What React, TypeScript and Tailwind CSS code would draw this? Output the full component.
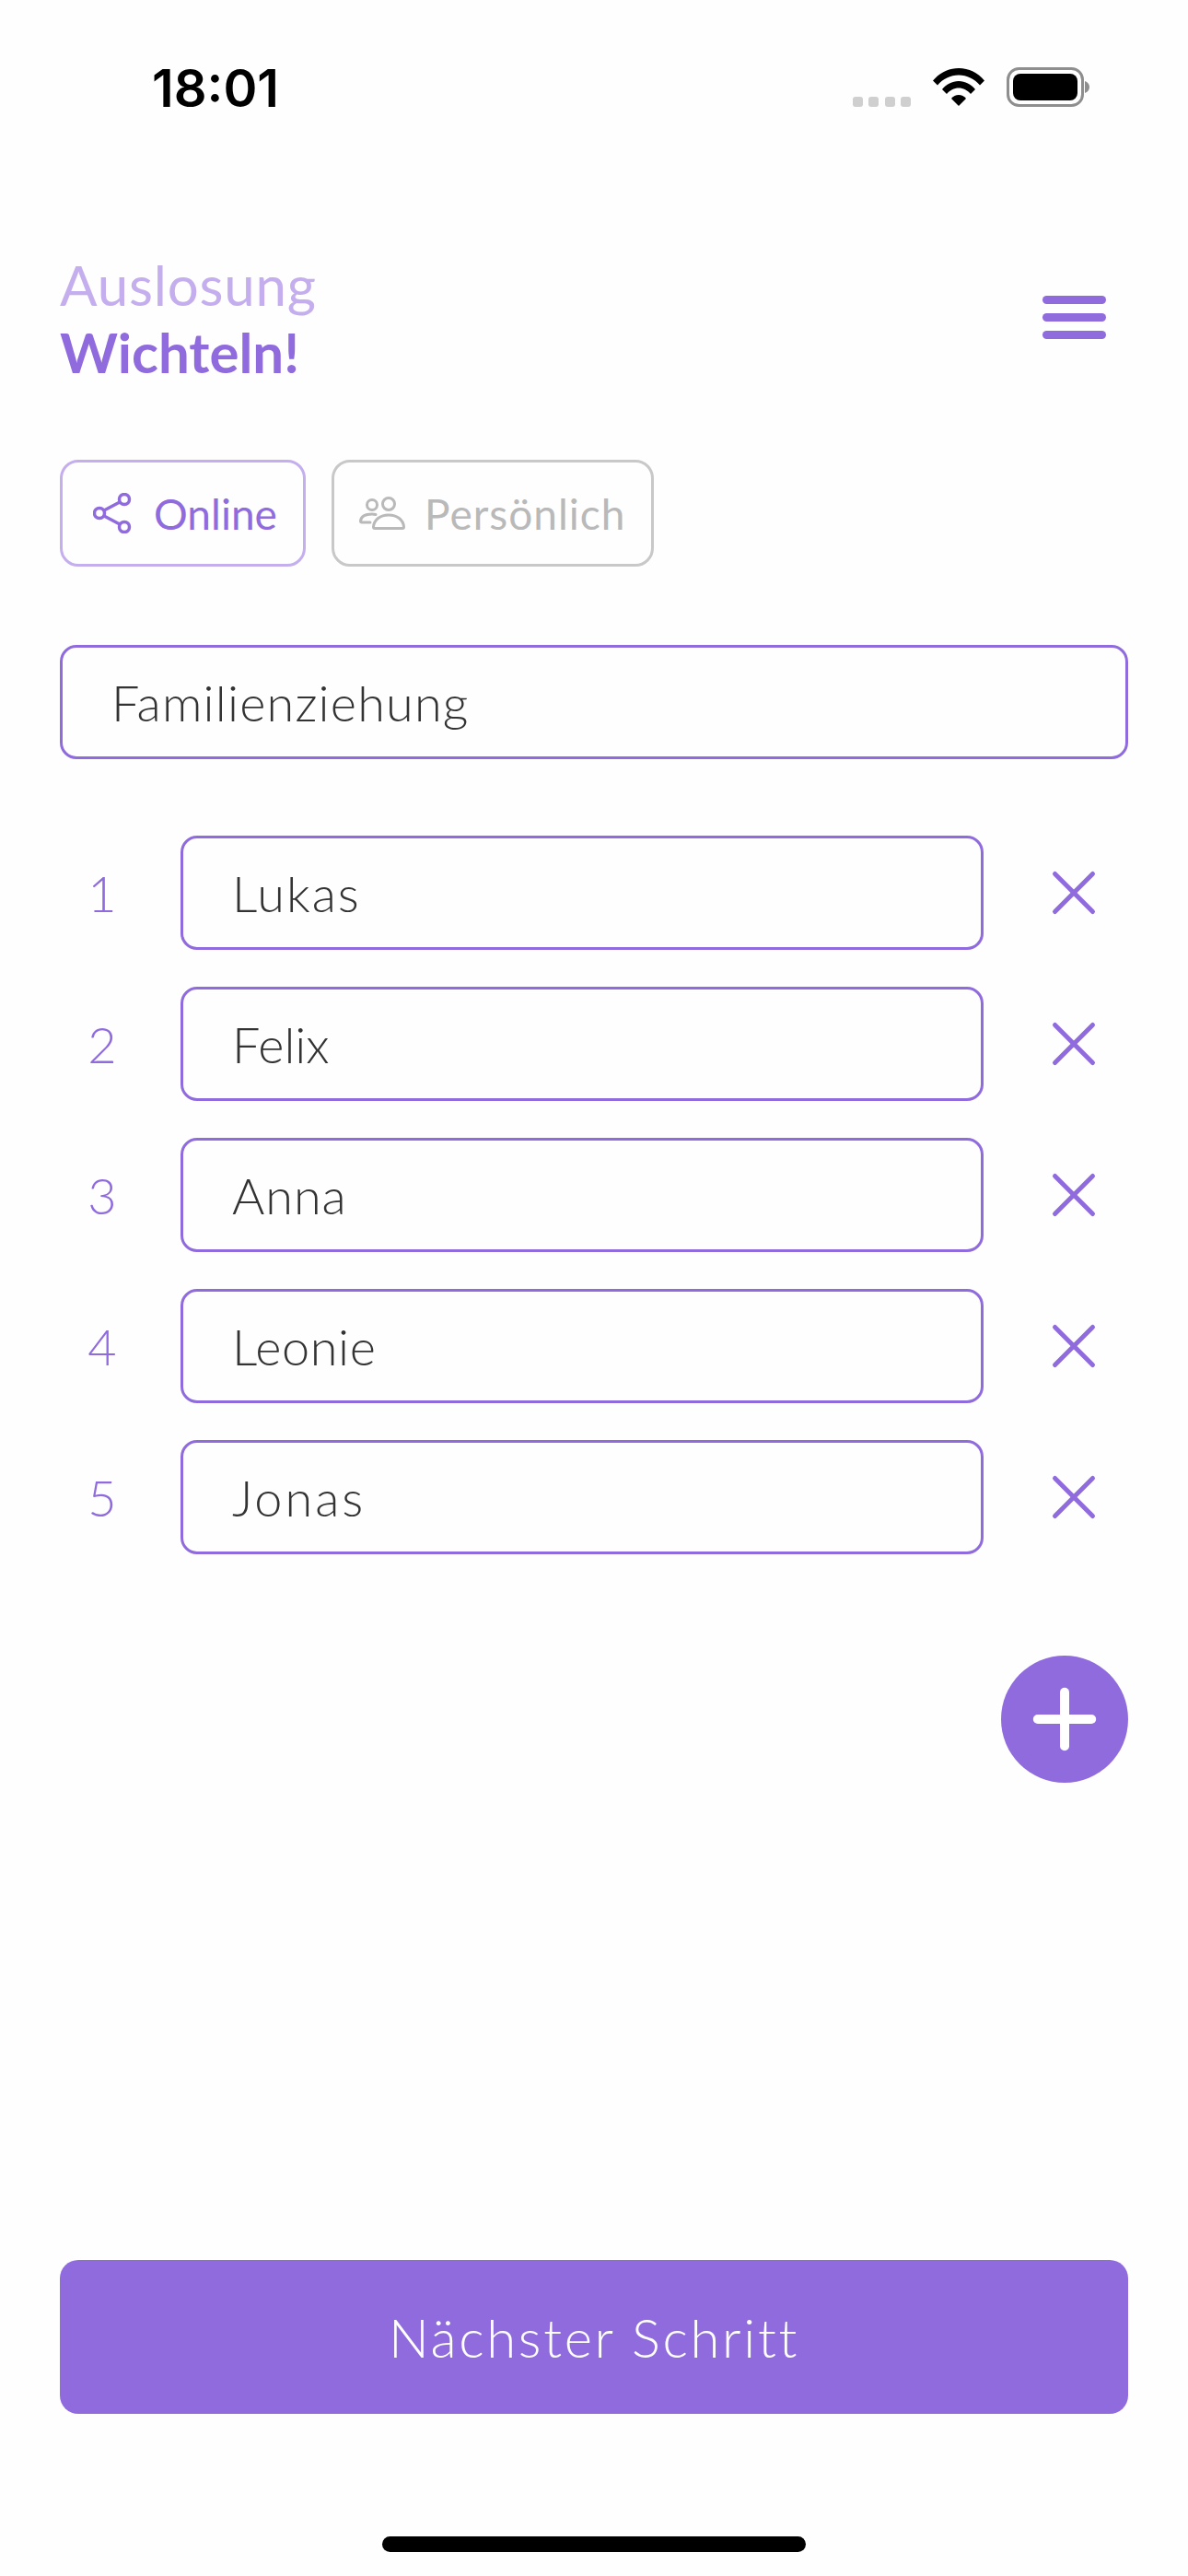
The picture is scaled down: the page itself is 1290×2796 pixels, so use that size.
import { Plus, X } from 'lucide-react';

const names = [
  { name: 'Lukas', spacing: 'tracking-[2px]' },
  { name: 'Felix', spacing: 'tracking-[0px]' },
  { name: 'Anna', spacing: 'tracking-[1px]' },
  { name: 'Leonie', spacing: 'tracking-[0.6px]' },
  { name: 'Jonas', spacing: 'tracking-[3px]' },
];

function Wifi() {
  return (
    <svg width="56" height="41" viewBox="0 0 56 41" fill="#000">
      <path d="M0 13.5C7 5 17 0 28 0s21 5 28 13.5l-5 5C45 11.500 37 7.500 28 7.500S11 11.500 5 18.500z" />
      <path d="M10 23C14.500 17.500 21 14 28 14s13.500 3.500 18 9l-5 5C37.500 24 33 21.500 28 21.500S18.500 24 15 28z" />
      <path d="M20 33c2-2.500 5-4 8-4s6 1.500 8 4L28 41z" />
    </svg>
  );
}

function Battery() {
  return (
    <svg width="90" height="43" viewBox="0 0 90 43">
      <rect x="1.500" y="1.500" width="81" height="40" rx="12" fill="none" stroke="#8e8e8e" strokeWidth="3" />
      <rect x="7" y="7" width="70" height="29" rx="8" fill="#000" />
      <path d="M85 15c3 1 5 3.500 5 6.500s-2 5.500-5 6.500z" fill="#8e8e8e" />
    </svg>
  );
}

function ShareIcon() {
  return (
    <svg width="42" height="44" viewBox="0 0 42 44" fill="none" stroke="#906bde" strokeWidth="3.500" strokeLinecap="round">
      <circle cx="7" cy="22" r="5.500" />
      <circle cx="34" cy="7" r="5.500" />
      <circle cx="34" cy="37" r="5.500" />
      <path d="M12 19 29 10M12 25l17 9" />
    </svg>
  );
}

function PeopleIcon() {
  return (
    <svg width="50" height="36" viewBox="0 0 50 36" fill="none" stroke="#b9b9b9" strokeWidth="3" strokeLinecap="round" strokeLinejoin="round">
      <circle cx="14" cy="9" r="5.500" />
      <circle cx="32" cy="8" r="6.500" />
      <path d="M17 34.500h30c1 0 1.500-.5 1.500-1.500C48 25 41 20 32 20s-16 5-16.500 13c0 1 .5 1.500 1.500 1.500z" />
      <path d="M12 28H3c-1 0-1.500-.5-1.500-1.500C2 21.500 7 19 14 19c1.500 0 3 .2 4 .5" />
    </svg>
  );
}

export default function App() {
  return (
    <div className="w-[1290px] h-[2796px] bg-[#fefefe] flex flex-col font-['Lato',sans-serif] overflow-hidden">
      {/* Status bar */}
      <div className="h-[170px] shrink-0 pl-[165px] pr-[107px] pt-[66px] flex items-start justify-between">
        <span className="font-['Inter',sans-serif] font-semibold text-[56px] leading-[60px] text-black">18:01</span>
        <div className="flex items-start pt-[8px]">
          <div className="flex gap-[6.500px] mt-[31px] mr-[24px]">
            {[0, 1, 2, 3].map((i) => (
              <span key={i} className="w-[11px] h-[11px] rounded-[3px] bg-[#cfcfcf]" />
            ))}
          </div>
          <Wifi />
          <div className="ml-[24px] -mt-px"><Battery /></div>
        </div>
      </div>

      <div className="flex-1 flex flex-col px-[65px]">
        {/* Header */}
        <div className="flex items-center justify-between mt-[103px] pr-[24px]">
          <div className="flex flex-col">
            <span className="text-[60px] leading-[73px] tracking-[0.8px] text-[#c4aeee]">Auslosung</span>
            <span className="text-[60px] leading-[73px] font-bold text-[#906bde]">Wichteln!</span>
          </div>
          <div className="flex flex-col gap-[10px] mt-[-4px]">
            <span className="w-[69px] h-[9px] rounded-full bg-[#906bde]" />
            <span className="w-[69px] h-[9px] rounded-full bg-[#906bde]" />
            <span className="w-[69px] h-[9px] rounded-full bg-[#906bde]" />
          </div>
        </div>

        {/* Mode switch */}
        <div className="flex gap-[28px] mt-[80px]">
          <button className="w-[267px] h-[116px] rounded-[20px] border-[3px] border-[#c4aeee] flex items-center pl-[33px] gap-[24px] text-[46px] text-[#906bde]">
            <ShareIcon />
            <span>Online</span>
          </button>
          <button className="w-[350px] h-[116px] rounded-[20px] border-[3px] border-[#c8c8c8] flex items-center pl-[27px] gap-[21px] text-[46px] tracking-[1px] text-[#b9b9b9]">
            <PeopleIcon />
            <span>Persönlich</span>
          </button>
        </div>

        {/* Draw name */}
        <div className="mt-[85px] h-[124px] rounded-[18px] border-[3px] border-[#906bde] flex items-center pl-[53px] text-[54px] font-light tracking-[1.200px] text-[#333333]">
          Familienziehung
        </div>

        {/* Participants */}
        <div className="mt-[83px] flex flex-col gap-[40px]">
          {names.map((item, i) => (
            <div key={item.name} className="flex items-center">
              <span className="w-[90px] pl-[2px] text-center text-[54px] font-light text-[#906bde]">{i + 1}</span>
              <div className={`ml-[41px] w-[872px] h-[124px] rounded-[18px] border-[3px] border-[#906bde] flex items-center pl-[53px] text-[54px] font-light text-[#333333] ${item.spacing}`}>
                {item.name}
              </div>
              <X className="ml-[57px] w-[82px] h-[82px] text-[#906bde]" strokeWidth={1.450} />
            </div>
          ))}
        </div>

        {/* Add participant */}
        <div className="flex justify-end mt-[110px]">
          <button className="w-[138px] h-[138px] rounded-full bg-[#906bde] flex items-center justify-center">
            <Plus className="w-[100px] h-[100px] text-white" strokeWidth={2.400} />
          </button>
        </div>

        {/* Next */}
        <button className="mt-[518px] h-[167px] rounded-[20px] bg-[#906bde] text-white text-[58px] font-light tracking-[2.700px] flex items-center justify-center">
          Nächster Schritt
        </button>

        {/* Home indicator */}
        <div className="mt-[133px] self-center w-[460px] h-[17px] rounded-full bg-black" />
      </div>
    </div>
  );
}
